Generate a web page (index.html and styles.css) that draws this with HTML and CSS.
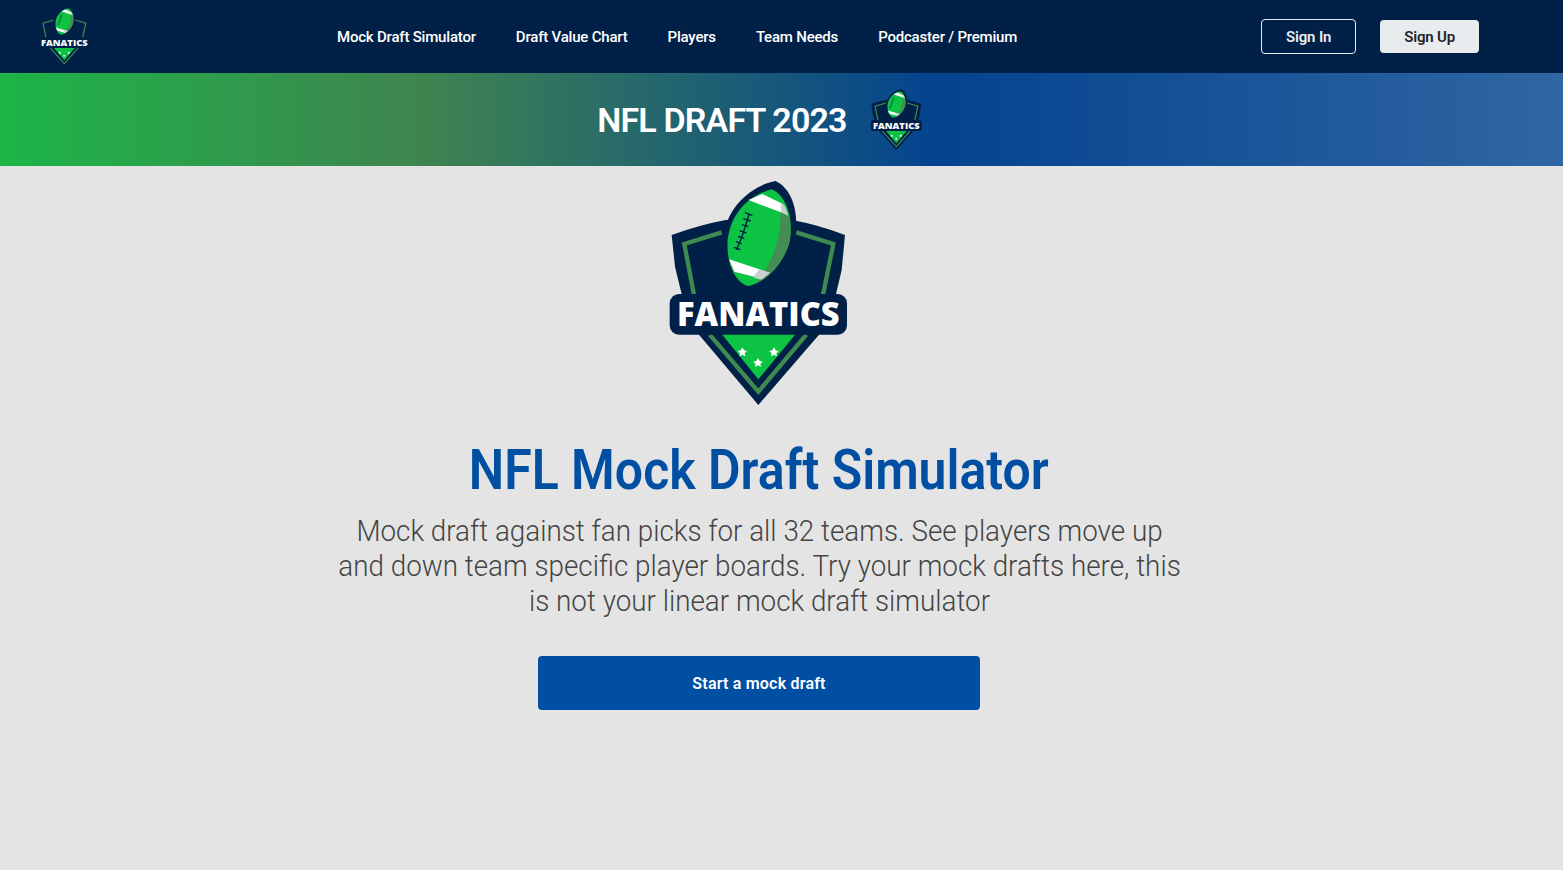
FILE: index.html
```html
<!DOCTYPE html>
<html lang="en">
<head>
    <meta charset="UTF-8">
    <meta name="viewport" content="width=device-width, initial-scale=1.0">
    <title>NFL Mock Draft Simulator</title>
    <link rel="stylesheet" href="styles.css">
</head>
<body>

<svg class="defs" width="0" height="0" aria-hidden="true">
    <symbol id="badge" viewBox="0 0 660 735" preserveAspectRatio="none">
        <path fill="#012047" d="M68 195 Q150 165 230 150 L430 150 Q510 165 588 195 L578 300 L558 385 L510 494 L328 705 L150 494 L100 380 L78 290 Z"/>
        <path fill="none" stroke="#3f8a50" stroke-width="13" d="M218 187 L106 222 L135 375 M442 187 L553 222 L522 375 M182 494 L328 665 L472 494"/>
        <path fill="#0cc343" d="M218 492 L440 492 L328 628 Z"/>
        <rect x="62" y="372" width="532" height="122" rx="28" fill="#012047"/>
        <path fill="#012047" d="M380 33 C445 65 456 170 424 244 C392 315 340 352 290 358 C238 342 218 272 223 200 C233 110 310 45 380 33 Z"/>
        <path fill="#0cc343" d="M368 58 C418 80 436 160 419 225 C397 290 345 340 295 348 C250 330 232 270 236 210 C245 130 300 75 368 58 Z"/>
        <path fill="#458c55" d="M392 100 C418 120 434 170 419 225 C400 280 360 325 318 342 C365 290 405 200 392 100 Z"/>
        <path fill="#fff" d="M298 90 L340 72 L402 102 L412 133 Z"/>
        <path fill="#c9cfd2" d="M395 99 L408 108 L418 137 L396 127 Z"/>
        <path fill="#fff" d="M240 268 L362 308 L340 326 L256 305 Z"/>
        <path fill="#c9cfd2" d="M330 298 L362 308 L335 329 L312 322 Z"/>
        <path fill="none" stroke="#012047" stroke-width="4" d="M300 132 C290 170 278 205 262 240 M288 128 L310 136 M283 146 L305 153 M278 164 L298 170 M272 182 L292 189 M267 199 L286 205 M261 215 L279 222 M255 232 L274 239"/>
        <path fill="#fff" d="M280 532 L285 541 L294 543 L287 550 L289 559 L280 554 L271 559 L273 550 L266 543 L275 541 Z M375 532 L380 541 L389 543 L382 550 L384 559 L375 554 L366 559 L368 550 L361 543 L370 541 Z M327 564 L332 573 L341 575 L334 582 L336 591 L327 586 L318 591 L320 582 L313 575 L322 573 Z"/>
    </symbol>
</svg>

<header class="topbar">
    <a class="brand" href="#">
        <svg class="logo-small" viewBox="0 0 660 735" preserveAspectRatio="none"><use href="#badge"/><text x="84" y="468" class="logo-text" textLength="488" lengthAdjust="spacingAndGlyphs">FANATICS</text></svg>
    </a>
    <nav class="nav">
        <a href="#">Mock Draft Simulator</a>
        <a href="#">Draft Value Chart</a>
        <a href="#">Players</a>
        <a href="#">Team Needs</a>
        <a href="#">Podcaster / Premium</a>
    </nav>
    <div class="auth">
        <a class="btn-signin" href="#">Sign In</a>
        <a class="btn-signup" href="#">Sign Up</a>
    </div>
</header>

<div class="banner">
    <span class="banner-title">NFL DRAFT 2023</span>
    <svg class="logo-small" viewBox="0 0 660 735" preserveAspectRatio="none"><use href="#badge"/><text x="84" y="468" class="logo-text" textLength="488" lengthAdjust="spacingAndGlyphs">FANATICS</text></svg>
</div>

<main class="hero">
    <svg class="logo-big" viewBox="0 0 660 735"><use href="#badge"/><text x="84" y="468" class="logo-text" textLength="488" lengthAdjust="spacingAndGlyphs">FANATICS</text></svg>
    <h1>NFL Mock Draft Simulator</h1>
    <p>Mock draft against fan picks for all 32 teams. See players move up and down team specific player boards. Try your mock drafts here, this is not your linear mock draft simulator</p>
    <a class="btn-start" href="#">Start a mock draft</a>
</main>

</body>
</html>
```

FILE: styles.css
```css
* {
    box-sizing: border-box;
}

body {
    margin: 0;
    min-height: 870px;
    background: #e4e4e4;
    font-family: "Roboto", "Liberation Sans", sans-serif;
}

a {
    text-decoration: none;
}

.defs {
    position: absolute;
}

.logo-text {
    font-family: "Open Sans", "Liberation Sans", sans-serif;
    font-weight: 800;
    font-size: 98px;
    fill: #fff;
}

.logo-small {
    display: block;
    width: 63px;
    height: 67px;
}

.topbar {
    display: flex;
    align-items: center;
    height: 73px;
    background: #012047;
    padding-left: 33px;
}

.brand {
    margin-right: 241px;
}

.nav {
    display: flex;
    gap: 40px;
}

.nav a {
    color: #fff;
    font-size: 15px;
    font-weight: 500;
    letter-spacing: -0.2px;
}

.auth {
    display: flex;
    align-items: center;
    gap: 24px;
    margin-left: 244px;
}

.btn-signin,
.btn-signup {
    display: flex;
    align-items: center;
    justify-content: center;
    border-radius: 4px;
    font-size: 15px;
    font-weight: 600;
    letter-spacing: -0.15px;
}

.btn-signin {
    width: 95px;
    height: 35px;
    border: 1px solid #e9ecef;
    color: #e9ecef;
}

.btn-signup {
    width: 99px;
    height: 33px;
    background: #e9ecef;
    color: #212529;
}

.banner {
    display: flex;
    align-items: center;
    justify-content: center;
    gap: 18px;
    height: 93px;
    padding-right: 38px;
    background: linear-gradient(90deg, #1cb547 0%, #3f8450 27%, #04438f 60%, #3066a3 100%);
}

.banner-title {
    color: #fff;
    font-size: 34px;
    font-weight: 600;
    letter-spacing: -0.85px;
}

.hero {
    display: flex;
    flex-direction: column;
    align-items: center;
    width: 1518px;
    padding-top: 4px;
}

.logo-big {
    display: block;
    width: 220px;
    height: 245px;
}

/* Roboto is wider than the original face, squeeze the big text */
.hero h1 {
    margin: 20px 0 0;
    color: #004fa3;
    font-size: 56px;
    font-weight: 600;
    line-height: 70px;
    transform: scaleX(0.893);
}

.hero p {
    width: 925px;
    margin: 8px 0 0;
    color: #444;
    font-size: 30px;
    font-weight: 300;
    line-height: 35px;
    text-align: center;
    transform: scaleX(0.927);
}

.btn-start {
    display: flex;
    align-items: center;
    justify-content: center;
    width: 442px;
    height: 54px;
    margin-top: 38px;
    border-radius: 4px;
    background: #004fa3;
    color: #fff;
    font-size: 16px;
    font-weight: 600;
    letter-spacing: 0.2px;
}
```
